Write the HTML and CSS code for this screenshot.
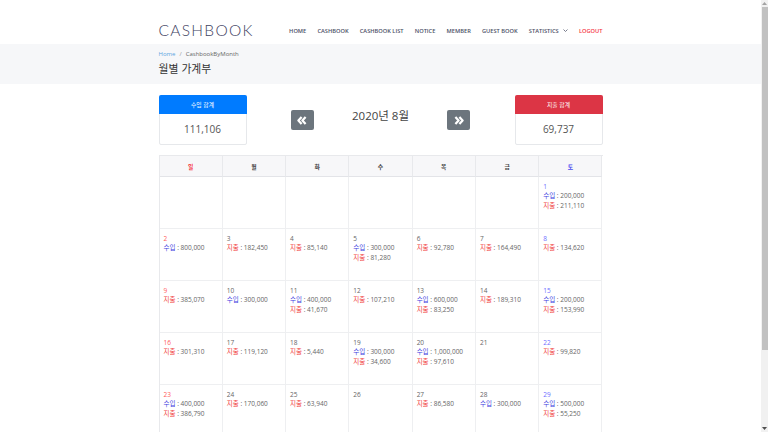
FILE: index.html
```html
<!DOCTYPE html>
<html lang="ko">
<head>
<meta charset="utf-8">
<title>CASHBOOK</title>
<link rel="stylesheet" href="styles.css">
</head>
<body>
<div class="fake-scroll">
  <div class="sb-btn"><svg width="5" height="3" viewBox="0 0 5 3"><path d="M0 3 L2.5 0 L5 3 Z" fill="#a3a3a3"/></svg></div>
  <div class="sb-track"><div class="sb-thumb"></div></div>
  <div class="sb-btn"><svg width="5" height="3" viewBox="0 0 5 3"><path d="M0 0 L2.5 3 L5 0 Z" fill="#505050"/></svg></div>
</div>

<header class="topbar">
  <div class="container nav-wrap">
    <div class="logo">CASHBOOK</div>
    <nav class="menu">
      <a>HOME</a>
      <a>CASHBOOK</a>
      <a>CASHBOOK LIST</a>
      <a>NOTICE</a>
      <a>MEMBER</a>
      <a>GUEST BOOK</a>
      <a class="drop">STATISTICS <svg width="5" height="3" viewBox="0 0 5 3"><path d="M0.5 0.5 L2.5 2.5 L4.5 0.5" fill="none" stroke="#6a6e80" stroke-width="0.9"/></svg></a>
      <a class="logout">LOGOUT</a>
    </nav>
  </div>
</header>

<section class="page-title">
  <div class="container">
    <div class="crumb"><span class="home">Home</span><span class="sep">/</span><span>CashbookByMonth</span></div>
    <h1>월별 가계부</h1>
  </div>
</section>

<main class="container">
  <div class="summary">
    <div class="sum-box income">
      <div class="sum-head">수입 합계</div>
      <div class="sum-val">111,106</div>
    </div>
    <div class="month-nav">
      <button class="arrow"><svg width="10" height="9" viewBox="0 0 10 9"><path d="M4.6 1 L1.4 4.5 L4.6 8 M8.6 1 L5.4 4.5 L8.6 8" fill="none" stroke="#fff" stroke-width="2.2" stroke-linejoin="round"/></svg></button>
      <span class="month">2020년 8월</span>
      <button class="arrow"><svg width="10" height="9" viewBox="0 0 10 9"><path d="M1.4 1 L4.6 4.5 L1.4 8 M5.4 1 L8.6 4.5 L5.4 8" fill="none" stroke="#fff" stroke-width="2.2" stroke-linejoin="round"/></svg></button>
    </div>
    <div class="sum-box expense">
      <div class="sum-head">지출 합계</div>
      <div class="sum-val">69,737</div>
    </div>
  </div>

  <div class="cal">
    <div class="hd sun">일</div><div class="hd">월</div><div class="hd">화</div><div class="hd">수</div><div class="hd">목</div><div class="hd">금</div><div class="hd sat">토</div>

    <div class="cell"></div><div class="cell"></div><div class="cell"></div><div class="cell"></div><div class="cell"></div><div class="cell"></div>
    <div class="cell"><div class="d sat">1</div><div><span class="in">수입</span> : 200,000</div><div><span class="out">지출</span> : 211,110</div></div>

    <div class="cell"><div class="d sun">2</div><div><span class="in">수입</span> : 800,000</div></div>
    <div class="cell"><div class="d">3</div><div><span class="out">지출</span> : 182,450</div></div>
    <div class="cell"><div class="d">4</div><div><span class="out">지출</span> : 85,140</div></div>
    <div class="cell"><div class="d">5</div><div><span class="in">수입</span> : 300,000</div><div><span class="out">지출</span> : 81,280</div></div>
    <div class="cell"><div class="d">6</div><div><span class="out">지출</span> : 92,780</div></div>
    <div class="cell"><div class="d">7</div><div><span class="out">지출</span> : 164,490</div></div>
    <div class="cell"><div class="d sat">8</div><div><span class="out">지출</span> : 134,620</div></div>

    <div class="cell"><div class="d sun">9</div><div><span class="out">지출</span> : 385,070</div></div>
    <div class="cell"><div class="d">10</div><div><span class="in">수입</span> : 300,000</div></div>
    <div class="cell"><div class="d">11</div><div><span class="in">수입</span> : 400,000</div><div><span class="out">지출</span> : 41,670</div></div>
    <div class="cell"><div class="d">12</div><div><span class="out">지출</span> : 107,210</div></div>
    <div class="cell"><div class="d">13</div><div><span class="in">수입</span> : 600,000</div><div><span class="out">지출</span> : 83,250</div></div>
    <div class="cell"><div class="d">14</div><div><span class="out">지출</span> : 189,310</div></div>
    <div class="cell"><div class="d sat">15</div><div><span class="in">수입</span> : 200,000</div><div><span class="out">지출</span> : 153,990</div></div>

    <div class="cell"><div class="d sun">16</div><div><span class="out">지출</span> : 301,310</div></div>
    <div class="cell"><div class="d">17</div><div><span class="out">지출</span> : 119,120</div></div>
    <div class="cell"><div class="d">18</div><div><span class="out">지출</span> : 5,440</div></div>
    <div class="cell"><div class="d">19</div><div><span class="in">수입</span> : 300,000</div><div><span class="out">지출</span> : 34,600</div></div>
    <div class="cell"><div class="d">20</div><div><span class="in">수입</span> : 1,000,000</div><div><span class="out">지출</span> : 97,610</div></div>
    <div class="cell"><div class="d">21</div></div>
    <div class="cell"><div class="d sat">22</div><div><span class="out">지출</span> : 99,820</div></div>

    <div class="cell"><div class="d sun">23</div><div><span class="in">수입</span> : 400,000</div><div><span class="out">지출</span> : 386,790</div></div>
    <div class="cell"><div class="d">24</div><div><span class="out">지출</span> : 170,060</div></div>
    <div class="cell"><div class="d">25</div><div><span class="out">지출</span> : 63,940</div></div>
    <div class="cell"><div class="d">26</div></div>
    <div class="cell"><div class="d">27</div><div><span class="out">지출</span> : 86,580</div></div>
    <div class="cell"><div class="d">28</div><div><span class="in">수입</span> : 300,000</div></div>
    <div class="cell"><div class="d sat">29</div><div><span class="in">수입</span> : 500,000</div><div><span class="out">지출</span> : 55,250</div></div>

    <div class="cell"><div class="d sun">30</div></div>
    <div class="cell"><div class="d">31</div></div>
    <div class="cell"></div><div class="cell"></div><div class="cell"></div><div class="cell"></div><div class="cell"></div>
  </div>
</main>
</body>
</html>
```

FILE: styles.css
```css
html, body {
  margin: 0;
  padding: 0;
}
html {
  overflow: hidden;
}
body {
  font-family: "Open Sans", "Noto Sans CJK KR", sans-serif;
  color: #555;
  background: #fff;
  padding-right: 7px;
}
.container {
  width: 444px;
  margin: 0 auto;
}

/* fake scrollbar (overlay on the right edge) */
.fake-scroll {
  position: fixed;
  top: 0;
  right: 0;
  width: 7px;
  height: 432px;
  background: #f1f1f1;
  display: flex;
  flex-direction: column;
  z-index: 10;
}
.sb-btn {
  height: 7px;
  display: flex;
  align-items: center;
  justify-content: center;
}
.sb-track {
  flex: 1;
  padding: 0 0.5px;
}
.sb-thumb {
  height: 343px;
  background: #c1c1c1;
}

/* top bar */
.topbar {
  height: 44px;
  background: #fff;
}
.nav-wrap {
  box-sizing: border-box;
  height: 44px;
  padding-top: 17px;
  display: flex;
  justify-content: space-between;
  align-items: center;
}
.nav-wrap > * {
  height: 27px;
  display: flex;
  align-items: center;
}
.logo {
  font-family: "Lato", sans-serif;
  font-weight: 300;
  font-size: 15.5px;
  letter-spacing: 1.3px;
  color: #3e4262;
  margin-top: -1px;
}
.menu {
  display: flex;
  gap: 11.2px;
  font-size: 5.7px;
  font-weight: 600;
  color: #4b4f66;
  white-space: nowrap;
}
.menu a {
  display: flex;
  align-items: center;
}
.menu .drop svg {
  margin-left: 4px;
}
.menu .logout {
  color: #f5333f;
}

/* page title */
.page-title {
  background: #f6f7f9;
  height: 40px;
  box-sizing: border-box;
  padding-top: 6px;
}
.crumb {
  font-size: 6px;
  line-height: 9px;
  color: #666;
}
.crumb .home {
  color: #5aa4e0;
}
.crumb .sep {
  color: #999;
  margin: 0 4px;
}
.page-title h1 {
  margin: 2px 0 0;
  font-family: "Noto Sans CJK KR", sans-serif;
  font-weight: 400;
  font-size: 10.8px;
  line-height: 14px;
  color: #333;
}

/* summary */
.summary {
  display: flex;
  justify-content: space-between;
  align-items: flex-start;
  margin-top: 11px;
}
.sum-box {
  width: 88px;
  height: 50px;
  box-sizing: border-box;
  border: 1px solid #e6e8eb;
  border-radius: 2px;
  display: flex;
  flex-direction: column;
  background: #fff;
}
.sum-head {
  height: 19px;
  margin: -1px -1px 0;
  border-radius: 2px 2px 0 0;
  color: #fff;
  font-family: "Noto Sans CJK KR", sans-serif;
  font-size: 5.8px;
  display: flex;
  align-items: center;
  justify-content: center;
}
.income .sum-head {
  background: #007bff;
}
.expense .sum-head {
  background: #dc3545;
}
.sum-val {
  flex: 1;
  display: flex;
  align-items: center;
  justify-content: center;
  font-size: 10px;
  color: #555;
  padding-bottom: 1px;
}
.month-nav {
  display: flex;
  align-items: flex-start;
  gap: 38px;
}
.arrow {
  width: 23px;
  height: 20px;
  margin-top: 15px;
  padding: 0;
  border: 0;
  border-radius: 2px;
  background: #6c757d;
  display: flex;
  align-items: center;
  justify-content: center;
}
.month {
  margin-top: 13px;
  font-family: "Open Sans", "Noto Sans CJK KR", sans-serif;
  font-size: 11.5px;
  line-height: 16px;
  color: #444;
}

/* calendar */
.cal {
  margin-top: 10px;
  margin-bottom: 38px;
  display: grid;
  grid-template-columns: repeat(7, 1fr);
  border-top: 1px solid #e8e9ec;
  border-left: 1px solid #e8e9ec;
}
.hd {
  box-sizing: border-box;
  height: 21px;
  background: #f7f7f9;
  border-right: 1px solid #e8e9ec;
  border-bottom: 1px solid #e3e4e8;
  display: flex;
  align-items: center;
  justify-content: center;
  font-family: "Noto Sans CJK KR", sans-serif;
  font-size: 5.8px;
  font-weight: 700;
  color: #444;
}
.hd.sun {
  color: #f5333f;
}
.hd.sat {
  color: #4a4af0;
}
.cell {
  box-sizing: border-box;
  height: 52px;
  border-right: 1px solid #eeeff1;
  border-bottom: 1px solid #eeeff1;
  padding: 4.5px 4px 0;
  font-size: 6.5px;
  line-height: 9.7px;
  color: #666;
  white-space: nowrap;
}
.cell .d {
  color: #666;
}
.cell .d.sun {
  color: #ff5a5a;
}
.cell .d.sat {
  color: #6d6dff;
}
.in {
  color: #3d3de0;
  font-family: "Noto Sans CJK KR", sans-serif;
}
.out {
  color: #f03a3a;
  font-family: "Noto Sans CJK KR", sans-serif;
}
```
